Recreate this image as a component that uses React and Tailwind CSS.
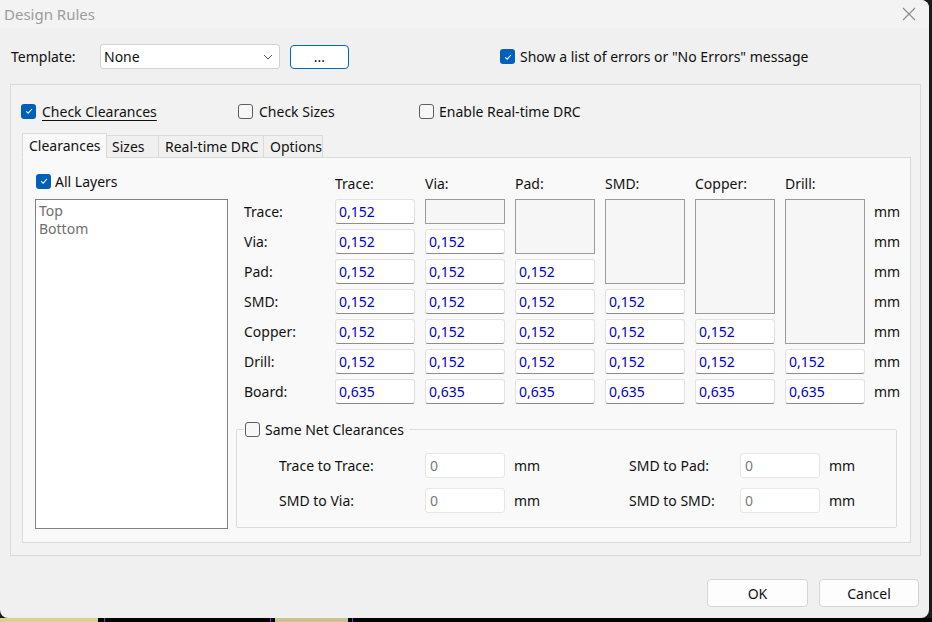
import React from "react";

const Box = ({ checked }) =>
  checked ? (
    <span className="w-[15px] h-[15px] shrink-0 rounded-[3px] bg-[#005fb8] flex items-center justify-center">
      <svg width="10" height="10" viewBox="0 0 10 10">
        <path d="M2.2 5.3 L4.2 7.2 L7.9 3" stroke="white" strokeWidth="1.1" fill="none" />
      </svg>
    </span>
  ) : (
    <span className="w-[15px] h-[15px] shrink-0 rounded-[3px] border border-[#5f5f5f] bg-[#f7f7f7]" />
  );

const LABELS = ["Trace:", "Via:", "Pad:", "SMD:", "Copper:", "Drill:", "Board:"];
const HEADS = ["Trace:", "Via:", "Pad:", "SMD:", "Copper:", "Drill:"];
const SPANS = ["", "row-span-1", "row-span-2", "row-span-3", "row-span-4", "row-span-5"];

function Value({ v }) {
  return (
    <div className="w-[80px] h-[25px] bg-white border border-[#e2e2e2] border-b-[#8c8c8c] rounded-[3px] flex items-center pl-[3px] text-[#0000c8]">
      {v}
    </div>
  );
}

function Matrix() {
  const cells = [];
  cells.push(<div key="h0" />);
  HEADS.forEach((h) => (
    cells.push(<div key={"h" + h} className="self-end leading-[20px]">{h}</div>)
  ));
  cells.push(<div key="hmm" />);
  LABELS.forEach((label, r) => {
    cells.push(<div key={"l" + r} className="flex items-center">{label}</div>);
    HEADS.forEach((_, c) => {
      if (r === 6) cells.push(<Value key={r + "-" + c} v="0,635" />);
      else if (c <= r) cells.push(<Value key={r + "-" + c} v="0,152" />);
      else if (r === 0)
        cells.push(
          <div key={"e" + c} className={`${SPANS[c]} w-[80px] border border-[#9b9b9b] bg-[#f6f6f6]`} />
        );
    });
    cells.push(<div key={"mm" + r} className="flex items-center -ml-[1px]">mm</div>);
  });
  return (
    <div className="grid grid-cols-[81px_repeat(6,80px)_auto] grid-rows-[22px] auto-rows-[25px] gap-x-[10px] gap-y-[5px] pl-[8px]">
      {cells}
    </div>
  );
}

function NetRow({ a, b, first }) {
  return (
    <div className={`flex items-center pl-[42px] ${first ? "mt-[14px]" : "mt-[10px]"}`}>
      <span className="w-[146px]">{a}</span>
      <div className="w-[80px] h-[25px] bg-white border border-[#e6e6e6] rounded-[3px] flex items-center pl-[4px] text-[#7a7a7a]">0</div>
      <span className="w-[124px] pl-[9px]">mm</span>
      <span className="w-[111px]">{b}</span>
      <div className="w-[80px] h-[25px] bg-white border border-[#e6e6e6] rounded-[3px] flex items-center pl-[4px] text-[#7a7a7a]">0</div>
      <span className="pl-[9px]">mm</span>
    </div>
  );
}

export default function App() {
  return (
    <div className="w-[932px] h-[622px] bg-[#1b1b1b] relative overflow-hidden font-['Noto_Sans',sans-serif] text-[14px] text-[#111]">
      <div className="w-[929px] h-[618px] bg-[#f0f0f0] rounded-b-[8px] rounded-tr-[8px] flex flex-col overflow-hidden">
        {/* title bar */}
        <div className="h-[28px] shrink-0 bg-[#f3f3f3] flex items-center justify-between pl-[4px] pr-[13px]">
          <span className="text-[15px] text-[#9c9c9c]">Design Rules</span>
          <svg width="14" height="14" viewBox="0 0 14 14">
            <path d="M1 1 L13 13 M13 1 L1 13" stroke="#8a8a8a" strokeWidth="1.1" />
          </svg>
        </div>

        {/* template row */}
        <div className="flex items-center mt-[16px] pl-[11px] h-[25px]">
          <span className="w-[89px]">Template:</span>
          <div className="w-[180px] h-[25px] bg-white border border-[#d3d3d3] rounded-[3px] flex items-center justify-between pl-[3px] pr-[6px]">
            <span>None</span>
            <svg width="10" height="6" viewBox="0 0 10 6">
              <path d="M1 1 L5 5 L9 1" stroke="#555" strokeWidth="1" fill="none" />
            </svg>
          </div>
          <button className="ml-[10px] w-[59px] h-[24px] bg-white border border-[#0067c0] rounded-[4px] flex items-center justify-center">
            ...
          </button>
          <div className="ml-[151px] flex items-center gap-[5px]">
            <Box checked />
            <span>Show a list of errors or "No Errors" message</span>
          </div>
        </div>

        {/* group panel */}
        <div className="mt-[15px] ml-[10px] w-[911px] h-[472px] border border-[#dadada] bg-[#f2f2f2] flex flex-col">
          <div className="flex items-center pt-[18px] pl-[10px] h-[34px]">
            <div className="w-[217px] flex items-center gap-[6px]">
              <Box checked />
              <span className="underline underline-offset-[3px]">Check Clearances</span>
            </div>
            <div className="w-[181px] flex items-center gap-[6px]">
              <Box />
              <span>Check Sizes</span>
            </div>
            <div className="flex items-center gap-[5px]">
              <Box />
              <span>Enable Real-time DRC</span>
            </div>
          </div>

          {/* tabs */}
          <div className="mt-[14px] pl-[11px] flex items-end h-[25px] -mb-px relative z-10">
            <div className="w-[85px] h-[25px] border border-[#dadada] border-b-[#f9f9f9] bg-[#f9f9f9] pl-[6px] flex items-center">Clearances</div>
            <div className="w-[53px] h-[23px] -ml-px border border-[#dadada] bg-[#f0f0f0] pl-[5px] flex items-center">Sizes</div>
            <div className="w-[106px] h-[23px] -ml-px border border-[#dadada] bg-[#f0f0f0] pl-[6px] flex items-center">Real-time DRC</div>
            <div className="w-[60px] h-[23px] -ml-px border border-[#dadada] bg-[#f0f0f0] pl-[6px] flex items-center">Options</div>
          </div>

          {/* pane */}
          <div className="ml-[11px] w-[889px] h-[386px] border border-[#dadada] bg-[#f9f9f9] flex pt-[15px] pl-[12px]">
            <div className="w-[193px] flex flex-col">
              <div className="h-[16px] pl-[1px] flex items-center gap-[4px]">
                <Box checked />
                <span>All Layers</span>
              </div>
              <div className="mt-[10px] h-[330px] border border-[#828282] bg-white pt-[2px] pl-[3px] text-[#6e6e6e] leading-[18px]">
                <div>Top</div>
                <div>Bottom</div>
              </div>
            </div>

            <div className="ml-[8px] w-[661px] flex flex-col -mt-[1px]">
              <Matrix />
              <fieldset className="mt-[15px] border border-[#dcdcdc] rounded-[2px] pb-[14px]">
                <legend className="ml-[7px] px-[1px]">
                  <span className="flex items-center gap-[5px] pr-[4px] h-[20px]">
                    <Box />
                    <span>Same Net Clearances</span>
                  </span>
                </legend>
                <NetRow first a="Trace to Trace:" b="SMD to Pad:" />
                <NetRow a="SMD to Via:" b="SMD to SMD:" />
              </fieldset>
            </div>
          </div>
        </div>

        {/* footer */}
        <div className="mt-[23px] flex justify-end gap-[11px] pr-[10px]">
          <button className="w-[101px] h-[28px] bg-[#fdfdfd] border border-[#d4d4d4] rounded-[4px]">OK</button>
          <button className="w-[100px] h-[28px] bg-[#fdfdfd] border border-[#d4d4d4] rounded-[4px]">Cancel</button>
        </div>
      </div>

      {/* desktop behind dialog */}
      <div className="h-[4px] flex">
        <div className="w-[98px] bg-[#d6d38f]" />
        <div className="w-[6px] bg-black" />
        <div className="w-[1px] bg-[#8a2be2]" />
        <div className="w-[165px] bg-black" />
        <div className="w-[1px] bg-[#8a2be2]" />
        <div className="w-[4px] bg-black" />
        <div className="w-[73px] bg-[#c9c58a]" />
        <div className="w-[4px] bg-black" />
        <div className="w-[1px] bg-[#8a2be2]" />
        <div className="flex-1 bg-black" />
      </div>
    </div>
  );
}
